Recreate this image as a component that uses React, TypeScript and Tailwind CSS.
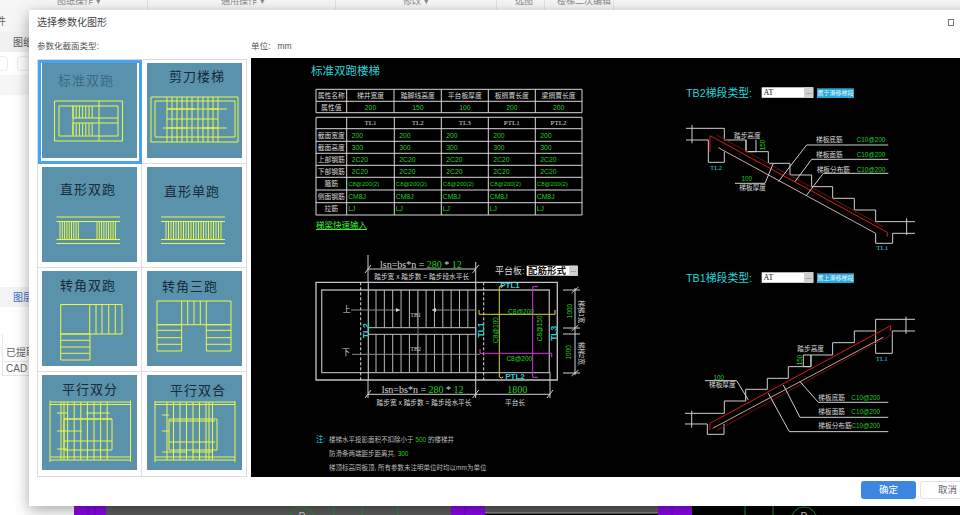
import React from 'react';

const CJK = "font-['Liberation_Sans','Noto_Sans_CJK_SC',sans-serif]";

// helpers for the little stair thumbnails (coords are inside a 95x95 tile)
const rect = (x1: number, y1: number, x2: number, y2: number) => `M${x1} ${y1}H${x2}V${y2}H${x1}Z`;
const vs = (xs: number[], y1: number, y2: number) => xs.map((x) => `M${x} ${y1}V${y2}`).join('');
const hs = (ys: number[], x1: number, x2: number) => ys.map((y) => `M${x1} ${y}H${x2}`).join('');
const range = (from: number, to: number, step: number) => {
  const out: number[] = [];
  for (let v = from; v <= to; v += step) out.push(v);
  return out;
};

const tiles = [
  {
    title: '标准双跑', tx: 44, ty: 17, selected: true,
    d: rect(12.5, 38, 80.5, 78) + rect(17, 43, 76, 73) + vs(range(31, 53, 3.2), 43, 55) + vs(range(31, 53, 3.2), 60, 72.5) + hs([55, 60], 31, 76) + vs([57], 38, 78) + vs([31], 43, 72),
  },
  {
    title: '剪刀楼梯', tx: 50, ty: 13,
    d: rect(4, 34, 91, 79) + rect(8, 38, 88, 74) + vs([20, 25, 30, 35, 40, 45, 51, 56, 61, 66, 71], 34, 79) + hs([46, 56, 65], 20, 71) + 'M20 46H48M62 46H80M16 65H40M55 65H80',
  },
  {
    title: '直形双跑', tx: 46, ty: 22,
    d: hs([50, 54.5, 72.5, 76.5], 14.5, 78) + vs(range(18, 37, 2.3), 54.5, 72.5) + vs(range(55, 75, 2.3), 54.5, 72.5),
  },
  {
    title: '直形单跑', tx: 45, ty: 24,
    d: hs([50, 54.5, 72.5, 76.5], 14, 78) + vs(range(19, 74, 2.5), 54.5, 72.5),
  },
  {
    title: '转角双跑', tx: 46, ty: 14,
    d: rect(18.7, 33.5, 80, 63) + vs([47.7, 54, 60, 66.7, 73.3], 33.5, 63) + rect(18.7, 63, 48, 89) + hs([69.3, 76, 82.3], 18.7, 48),
  },
  {
    title: '转角三跑', tx: 43, ty: 15,
    d: rect(10, 30, 84, 53.7) + vs([34.7, 40.7, 47, 53.3, 59.3], 30, 53.7) + rect(10, 53.7, 34.7, 80) + hs([59.3, 66.7, 73.3], 10, 34.7) + rect(59.3, 53.7, 84, 80) + hs([59.3, 66.7, 73.3], 59.3, 84),
  },
  {
    title: '平行双分', tx: 48, ty: 14,
    d: hs([27, 29.5, 82, 85], 8, 89) + vs([8, 88.5], 25.5, 87) + vs(range(19, 67, 6.6), 27, 85) + vs([22], 27, 85) + rect(22, 44, 70, 75) + hs([44, 66], 22, 70) + 'M15 38H25M15 56H40M15 74H25M44 38H68',
  },
  {
    title: '平行双合', tx: 51, ty: 15,
    d: hs([27, 29.5, 82, 85], 8, 88) + vs([8, 88], 26, 87) + vs(range(20, 68, 6.5), 27, 85) + vs([62], 27, 85) + rect(22, 44, 70, 75) + hs([46, 67], 22, 68) + 'M15 40H22M15 56H22M15 77H40M45 77H66',
  },
];

function StairTile({ t }: { t: (typeof tiles)[number] }) {
  return (
    <svg viewBox="0 0 95 95" className="block w-[95px] h-[95px] bg-[#5a92ab]">
      <text
        x={t.tx}
        y={t.ty}
        textAnchor="middle"
        dominantBaseline="central"
        fontSize="13"
        letterSpacing="1"
        fill={t.selected ? '#3c6a84' : '#17293a'}
      >
        {t.title}
      </text>
      <path d={t.d} fill="none" stroke="#e8f84a" strokeWidth="1" />
    </svg>
  );
}

function T({
  x, y, c = '#d8d8d8', s = 7, a = 'middle', rot, serif, bold, children,
}: {
  x: number; y: number; c?: string; s?: number; a?: 'start' | 'middle' | 'end'; rot?: number; serif?: boolean; bold?: boolean; children: React.ReactNode;
}) {
  return (
    <text
      x={x}
      y={y}
      fill={c}
      fontSize={s}
      textAnchor={a}
      dominantBaseline="central"
      fontWeight={bold ? 700 : 400}
      fontFamily={serif ? "'Liberation Serif','Noto Sans CJK SC',serif" : undefined}
      transform={rot ? `rotate(${rot} ${x} ${y})` : undefined}
    >
      {children}
    </text>
  );
}

const GREEN = '#1fd11f';
const CYAN = '#23d6dc';
const colX = [316, 346.7, 394.3, 441.3, 488.3, 535.3, 582];
const colMid = [331.3, 370.5, 417.8, 464.8, 511.8, 558.6];
const rowY2 = [117.3, 128.7, 141.3, 153.3, 165.3, 177.3, 190, 202.7, 215];

const table2 = [
  ['截面宽度', '200'],
  ['截面高度', '300'],
  ['上部钢筋', '2C20'],
  ['下部钢筋', '2C20'],
  ['箍筋', 'C8@200(2)'],
  ['侧面钢筋', 'CM8J'],
  ['拉筋', 'LJ'],
];

function StairSection({ flip }: { flip?: boolean }) {
  if (flip) {
    return (
      <g transform="translate(670 260) scale(0.3333)" fill="none">
        <path d="M735 178H617V213H553V248H488V285H423V320H355V355H292V388H227V423H163V460H45" stroke="#cfcfcf" strokeWidth="3" />
        <path d="M45 492H112V523H162V492M617 213V280H667V213H735M400 285H423V320H400ZM708 170V222M65 452V503" stroke="#cfcfcf" strokeWidth="3" />
        <path d="M120 510V490L662 197V213" stroke="#d81c1c" strokeWidth="3" />
        <path d="M128 505L640 232" stroke="#c8a0a0" strokeWidth="3" />
        <path d="M140 512L668 222" stroke="#6a1010" strokeWidth="3" />
        <path d="M390 365L445 427H655M340 375L390 472H655M295 400L358 515H655M105 362H200L235 420" stroke="#cfcfcf" strokeWidth="3" />
        <T x={422} y={267} s={20}>踏步高度</T>
        <T x={388} y={300} s={19} c={GREEN} rot={-90}>150</T>
        <T x={146} y={352} s={19} c={GREEN}>100</T>
        <T x={157} y={375} s={20}>梯板厚度</T>
        <T x={485} y={413} s={20}>梯板底筋</T>
        <T x={587} y={413} s={19} c={GREEN}>C10@200</T>
        <T x={485} y={454} s={20}>梯板面筋</T>
        <T x={587} y={454} s={19} c={GREEN}>C10@200</T>
        <T x={495} y={498} s={20}>梯板分布筋</T>
        <T x={587} y={498} s={19} c={GREEN}>C10@200</T>
        <T x={635} y={297} s={21} c={CYAN} serif>TL1</T>
      </g>
    );
  }
  return (
    <g transform="translate(670 70) scale(0.3333)" fill="none">
      <path d="M48 175H163V210H228V245H295V280H360V315H425V350H488V385H553V420H617V455H735" stroke="#cfcfcf" strokeWidth="3" />
      <path d="M48 210H115V277H163V245M735 490H668V520H617V490M228 210V245H258V210M66 165V220M710 445V495" stroke="#cfcfcf" strokeWidth="3" />
      <path d="M120 245V197L652 487V500" stroke="#d81c1c" strokeWidth="3" />
      <path d="M145 233L617 490" stroke="#d0a8a8" strokeWidth="3" />
      <path d="M140 195L640 470" stroke="#6a1010" strokeWidth="3" />
      <path d="M325 335L410 225H655M375 335L425 268H655M408 378L460 310H655M195 340H285L310 280" stroke="#cfcfcf" strokeWidth="3" />
      <T x={232} y={198} s={20}>踏步高度</T>
      <T x={277} y={225} s={19} c={GREEN} rot={-90}>150</T>
      <T x={230} y={326} s={19} c={GREEN}>100</T>
      <T x={248} y={352} s={20}>梯板厚度</T>
      <T x={478} y={210} s={20}>梯板底筋</T>
      <T x={603} y={210} s={19} c={GREEN}>C10@200</T>
      <T x={478} y={254} s={20}>梯板面筋</T>
      <T x={603} y={254} s={19} c={GREEN}>C10@200</T>
      <T x={490} y={298} s={20}>梯板分布筋</T>
      <T x={603} y={298} s={19} c={GREEN}>C10@200</T>
      <T x={138} y={295} s={21} c={CYAN} serif>TL2</T>
      <T x={637} y={535} s={21} c={CYAN} serif>TL1</T>
    </g>
  );
}

function TypeRow({ label, y, btn }: { label: string; y: number; btn: string }) {
  return (
    <g>
      <T x={686} y={y} s={10.8} c={CYAN} a="start">{label}</T>
      <rect x={761.7} y={y - 6} width={51.6} height={10.5} fill="#fff" />
      <rect x={804} y={y - 6} width={9.3} height={10.5} fill="#d0d0d0" />
      <T x={763.5} y={y - 1} s={8} c="#111" a="start" serif>AT</T>
      <T x={808.6} y={y - 2} s={7} c="#444">...</T>
      <rect x={817} y={y - 5} width={37} height={9.7} fill="#2aa7d8" />
      <T x={835.5} y={y} s={6} c="#e8f8ff">{btn}</T>
    </g>
  );
}

function CadDrawing() {
  return (
    <svg viewBox="251 58 709 419" className="block w-full h-full bg-black">
      <T x={311} y={71} s={11.5} c={CYAN} a="start">标准双跑楼梯</T>

      {/* 属性表 */}
      <g stroke="#d8d8d8" strokeWidth="1" fill="none">
        <path d={rect(316, 89.3, 582, 112.7) + hs([101.3], 316, 582) + vs([346.7, 394, 441.3, 488.3, 535.3], 89.3, 112.7)} />
        <path d={hs(rowY2, 316, 582) + vs(colX, 117.3, 215)} />
      </g>
      {['属性名称', '梯井宽度', '踏脚线高度', '平台板厚度', '板搁置长度', '梁搁置长度'].map((h, i) => (
        <T key={h} x={colMid[i]} y={95.5} s={6.8}>{h}</T>
      ))}
      <T x={331.3} y={107.3} s={6.8}>属性值</T>
      {['200', '150', '100', '200', '200'].map((v, i) => (
        <T key={i} x={colMid[i + 1]} y={107.3} s={6.8} c={GREEN}>{v}</T>
      ))}

      {['TL1', 'TL2', 'TL3', 'PTL1', 'PTL2'].map((h, i) => (
        <T key={h} x={colMid[i + 1]} y={123} s={7} serif>{h}</T>
      ))}
      {table2.map(([name, val], r) => (
        <g key={name}>
          <T x={331.3} y={(rowY2[r + 1] + rowY2[r + 2]) / 2} s={6.8}>{name}</T>
          {colX.slice(1, 6).map((x) => (
            <T key={x} x={x + (r < 4 ? 5 : 1.5)} y={(rowY2[r + 1] + rowY2[r + 2]) / 2} s={r === 4 ? 6 : 6.8} c={GREEN} a="start">{val}</T>
          ))}
        </g>
      ))}
      <T x={316} y={224.5} s={8.5} c="#39f03a" a="start">梯梁快速输入</T>
      <path d="M316 229.5H367" stroke="#39f03a" />

      {/* 平面图 */}
      <T x={380} y={264} s={10} a="start" serif>lsn=bs*n = <tspan fill={GREEN}>280</tspan> * <tspan fill={GREEN}>12</tspan></T>
      <T x={421.7} y={276.5} s={6.7}>踏步宽 x 踏步数 = 踏步段水平长</T>
      <path d="M368 269H475.7M365 273L371 265M472.7 273L478.7 265M368 255V282M475.7 262V282" stroke="#cfcfcf" fill="none" />
      <T x={495} y={270.5} s={9} a="start">平台板:</T>
      <rect x={526.7} y={265.7} width={51} height={10} fill="#fff" />
      <rect x={569} y={265.7} width={8.7} height={10} fill="#d0d0d0" />
      <T x={528} y={270.7} s={9.5} c="#111" a="start" bold>配筋形式</T>
      <T x={573.3} y={269.5} s={7} c="#444">...</T>

      <g fill="none" stroke="#c4c4c4">
        <path d={rect(316, 282.3, 557.3, 380)} strokeWidth="1.3" />
        <path d={rect(321.7, 290, 549.3, 372.7)} strokeWidth="1.3" stroke="#a8a8a8" />
        <path d={vs([360.7, 483.7], 282.3, 380)} strokeDasharray="3 2" stroke="#e0e0e0" />
        <path d={vs([368.3, 475.7], 282.3, 380)} strokeWidth="1.2" />
        <path d={rect(368.3, 327.7, 475.7, 334.3)} />
        <path d={vs(range(376, 468, 8.35), 290, 327.7) + vs(range(376, 468, 8.35), 334.3, 372.7)} stroke="#b8b8b8" />
        <path d="M418 290V372.7" stroke="#777" />
        <path d="M351 310H400M432 310H476M352 354.3H480" stroke="#8c8c8c" />
      </g>
      <path d="M400 310l-4-2v4zM432 310l4-2v4z" fill="#d0d0d0" />
      <T x={346.7} y={309} s={8}>上</T>
      <T x={346} y={352.7} s={8}>下</T>
      <T x={415.7} y={315} s={6} serif>TB1</T>
      <T x={415.7} y={349} s={6} serif>TB2</T>
      <T x={365.7} y={330.7} s={8.5} c={CYAN} rot={-90} bold>TL2</T>
      <T x={481} y={330} s={8.5} c={CYAN} rot={-90} bold>TL1</T>
      <T x={554.3} y={333.3} s={8.5} c={CYAN} rot={-90} bold>TL3</T>
      <T x={510} y={285.7} s={8} c={CYAN} bold>PTL1</T>
      <T x={515} y={376.7} s={8} c={CYAN} bold>PTL2</T>
      <path d="M479 310V314.3H555V310M499.3 377V286.7q2-2 4 0M499.3 377q2 2 4 0" fill="none" stroke="#d8d83a" />
      <path d="M480 349V353.3H551.7V357M538 286.7H532.7V377.3H538" fill="none" stroke="#d93ad9" />
      <T x={521} y={311.5} s={6.5} c={GREEN}>C8@200</T>
      <T x={519.3} y={358.7} s={6.5} c={GREEN}>C8@200</T>
      <T x={495} y={330} s={6.5} c={GREEN} rot={-90}>C8@100</T>
      <T x={540} y={328.3} s={6.5} c={GREEN} rot={-90}>C8@150</T>

      <path d="M563 290H580M563 328H580M563 334H580M563 373H580M575 288V375M571.5 293L578.5 287M571.5 331L578.5 325M571.5 376L578.5 370" stroke="#cfcfcf" fill="none" />
      <T x={569} y={311} s={6.5} c={GREEN} rot={-90}>1000</T>
      <T x={569} y={352.3} s={6.5} c={GREEN} rot={-90}>1000</T>
      <T x={581.7} y={311.7} s={6.5} rot={90}>梯梯1宽</T>
      <T x={581.7} y={353.3} s={6.5} rot={90}>梯梯2宽</T>

      <T x={381.7} y={389} s={10} a="start" serif>lsn=bs*n = <tspan fill={GREEN}>280</tspan> * <tspan fill={GREEN}>12</tspan></T>
      <T x={517.3} y={389} s={10} c={GREEN} serif>1800</T>
      <path d="M368 394.3H550M365 398L371 390M472.7 398L478.7 390M547 398L553 390M368 380V398M475.7 380V398M550 372V398" stroke="#cfcfcf" fill="none" />
      <T x={424} y={402.3} s={6.7}>踏步宽 x 踏步数 = 踏步段水平长</T>
      <T x={515} y={402.3} s={6.7}>平台长</T>

      <T x={316} y={439} s={7.5} c={CYAN} a="start">注:</T>
      <T x={329} y={439} s={6.5} c="#bbbbbb" a="start">楼梯水平投影面积不扣除小于 <tspan fill={GREEN}>500</tspan> 的楼梯井</T>
      <T x={329} y={453.3} s={6.5} c="#bbbbbb" a="start">防滑条两端距步距离共, <tspan fill={GREEN}>300</tspan></T>
      <T x={329} y={467.3} s={6.5} c="#bbbbbb" a="start">梯顶标高同板顶, 所有参数未注明单位时均以mm为单位</T>

      {/* 右侧梯段 */}
      <TypeRow label="TB2梯段类型:" y={93.3} btn="属于滑移梯段" />
      <StairSection />
      <TypeRow label="TB1梯段类型:" y={278.3} btn="属上滑移梯段" />
      <StairSection flip />
    </svg>
  );
}

function BottomCad() {
  return (
    <svg viewBox="74 506 886 9" className="block w-full h-[9px] mt-auto bg-black">
      <rect x="74" y="506" width="32" height="9" fill="#8a08e8" />
      <rect x="106" y="506" width="345" height="9" fill="#5c5c5c" />
      <rect x="451" y="506" width="34" height="9" fill="#8a08e8" />
      <rect x="485" y="506" width="173" height="7" fill="#5c5c5c" />
      <path d="M485 513H658" stroke="#a8a8a8" />
      <rect x="658" y="506" width="34" height="9" fill="#8a08e8" />
      <path d="M88 506V515M95 506V515M465 506V515M672 506V515" stroke="#6a05c0" />
      <path d="M334 506V515M362 506V515M398 506V515M745 506V515M773 506V515" stroke="#1f9a2f" />
      <circle cx="302" cy="520" r="13" fill="none" stroke="#1f9a2f" />
      <circle cx="804" cy="520" r="13" fill="none" stroke="#1f9a2f" />
      <text x="302" y="518" textAnchor="middle" fontSize="9" fill="#ddd">D</text>
      <text x="804" y="518" textAnchor="middle" fontSize="9" fill="#ddd">D</text>
    </svg>
  );
}

const toolbar = [
  { w: 148, label: '图纸操作 ▾', pl: 'pl-[57px]' },
  { w: 188, label: '通用操作 ▾', pl: 'pl-[73px]' },
  { w: 161, label: '修改 ▾', pl: 'pl-[67px]' },
  { w: 48, label: '选图', pl: 'pl-[18px]' },
  { w: 69, label: '楼梯二次编辑', pl: 'pl-[12px]' },
];

export default function App() {
  return (
    <div className={`relative w-[960px] h-[515px] overflow-hidden flex flex-col bg-white text-[#555] ${CJK}`}>
      {/* 后面的主界面 */}
      <div className="flex h-[10px] shrink-0 overflow-hidden bg-[#f6f6f6] text-[9px] text-[#888]">
        {toolbar.map((b) => (
          <div key={b.label} style={{ width: b.w }} className={`shrink-0 border-r border-[#e2e2e2] leading-none whitespace-nowrap ${b.pl}`}>
            <span className="block -mt-[3px]">{b.label}</span>
          </div>
        ))}
      </div>
      <div className="flex flex-1 min-h-0">
        <aside className="w-[74px] shrink-0 flex flex-col bg-white text-[10px]">
          <div className="h-[22px] flex items-center -ml-1 pl-0 bg-[#f5f5f5] text-[#666]">件</div>
          <div className="h-[20px] flex items-center pl-[13px] bg-[#f0f0f0] text-[#555] whitespace-nowrap">图纸</div>
          <div className="h-[23px] flex items-center gap-[9px] -ml-[5px]">
            <div className="w-[13px] h-[15px] rounded-sm border border-[#ececec]" />
            <div className="w-[13px] h-[15px] rounded-sm border border-[#ececec]" />
          </div>
          <div className="h-[20px] bg-[#f6f6f6]" />
          <div className="h-[192px]" />
          <div className="h-[20px] flex items-center pl-[13px] bg-[#f3f3f3] text-[#3b6fd4] whitespace-nowrap">图层</div>
          <div className="h-[27px]" />
          <div className="flex flex-col text-[10px] text-[#666] border-l border-[#e6e6e6] ml-[2px]">
            <div className="h-[28px] flex items-end pb-[1px] pl-[3px] border-b border-[#e6e6e6] whitespace-nowrap">已提取</div>
            <div className="h-[14px] flex items-center pl-[3px] border-b border-[#e6e6e6] whitespace-nowrap">CAD 原</div>
          </div>
        </aside>
        <div className="flex-1 flex flex-col bg-[#f4f4f4]">
          <BottomCad />
        </div>
      </div>

      {/* 弹窗 */}
      <div className="absolute left-[29px] top-[10px] w-[960px] h-[496px] bg-white flex flex-col shadow-[0_4px_14px_rgba(0,0,0,0.35)]">
        <div className="h-[24px] shrink-0 flex items-center pl-2 text-[10px] text-[#444]">
          <span>选择参数化图形</span>
          <span className="ml-[841px] w-[6px] h-[7px] border border-[#777]" />
        </div>
        <div className="h-[24px] shrink-0 flex items-center pl-2 text-[8.5px] text-[#555]">
          <span className="w-[214px]">参数化截面类型:</span>
          <span>单位:&nbsp;&nbsp;&nbsp;mm</span>
        </div>
        <div className="flex gap-1 pl-2 h-[419px] shrink-0">
          <div className="w-[210px] h-[418px] mt-px grid grid-cols-2 grid-rows-4 border border-[#dcd8dc] box-border">
            {tiles.map((t, i) => (
              <div
                key={t.title}
                className={`flex justify-center pt-[3px] border-[#e2dde2] ${i % 2 === 0 ? 'border-r' : ''} ${i < 6 ? 'border-b' : ''} ${t.selected ? 'outline-[3px] outline-solid -outline-offset-[3px] outline-[#4aa3f0]' : ''}`}
              >
                <StairTile t={t} />
              </div>
            ))}
          </div>
          <div className="w-[709px] h-[419px] shrink-0">
            <CadDrawing />
          </div>
        </div>
        <div className="flex-1 flex items-center pl-[832px] gap-1 pb-[3px] text-[9.5px]">
          <button className="w-[55px] h-[18px] rounded-[3px] bg-[#3a86e0] text-white">确定</button>
          <button className="w-[55px] h-[18px] rounded-[3px] border border-[#e2e2e2] bg-white text-[#666]">取消</button>
        </div>
      </div>
    </div>
  );
}
